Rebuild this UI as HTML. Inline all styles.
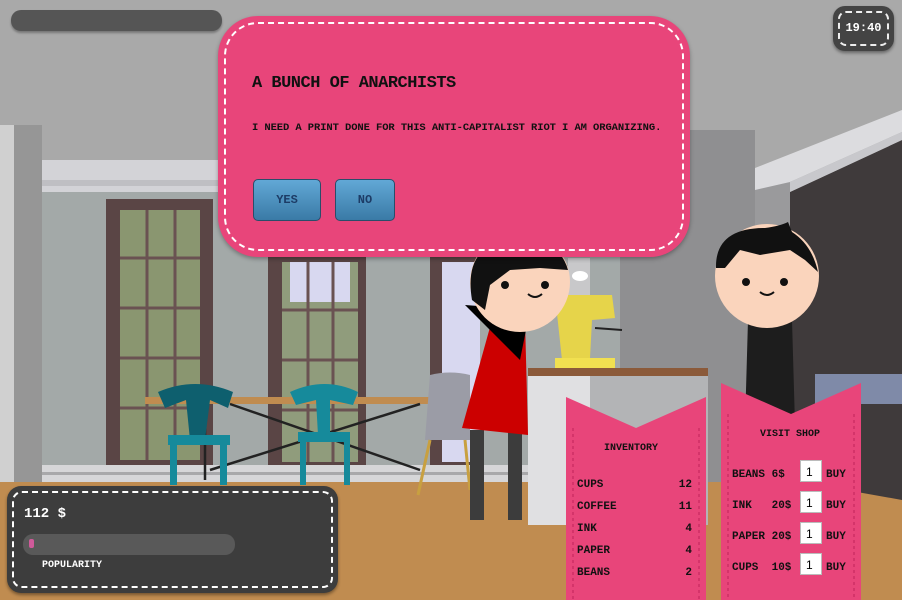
<!DOCTYPE html>
<html><head><meta charset="utf-8"><style>
*{margin:0;padding:0;box-sizing:border-box}
body{width:902px;height:600px;overflow:hidden;position:relative;background:#a9a9a9;font-family:"Liberation Mono",monospace;font-weight:bold;text-transform:uppercase}
.abs{position:absolute}
.dlg{left:218px;top:16px;width:472px;height:241px;background:#e8457a;border-radius:40px;box-shadow:0 2px 4px rgba(0,0,0,.3)}
.dlg .in{position:absolute;left:6px;top:6px;right:6px;bottom:6px;border:2px dashed #fff;border-radius:34px}
.btn{position:absolute;top:163px;height:42px;background:linear-gradient(#62a8d6,#3a7aa6);border:1px solid #2a4d6a;border-radius:5px;color:#1d3c66;font-size:12px;text-align:center;line-height:40px}
.panel{color:#111;font-size:11px}
</style></head><body>
<svg class="abs" style="left:0;top:0" width="902" height="600">
<rect width="902" height="600" fill="#a9a9a9"/>
<rect x="42" y="190" width="720" height="300" fill="#a3a9a8"/>
<rect x="42" y="160" width="190" height="32" fill="#d3d3d7"/>
<rect x="42" y="180" width="190" height="6" fill="#bfbfc3"/>
<rect x="0" y="125" width="14" height="375" fill="#d0d0d0"/>
<rect x="14" y="125" width="28" height="375" fill="#969696"/>
<rect x="620" y="130" width="135" height="360" fill="#8f8f91"/>
<rect x="755" y="170" width="40" height="320" fill="#9a9a9c"/>
<polygon points="755,168 902,110 902,132 790,182 755,190" fill="#dcdcdf"/>
<polygon points="790,192 902,140 902,600 790,600" fill="#3f3a3b"/>
<polygon points="790,182 902,132 902,140 790,192" fill="#c8c8cc"/>
<rect x="815" y="374" width="87" height="30" fill="#7f8aa8"/>
<polygon points="790,480 902,500 902,600 790,600" fill="#c08c50"/>
<rect x="106" y="199" width="107" height="272" fill="#5a4545"/>
<rect x="120" y="210" width="80" height="250" fill="#8a9670"/>
<g stroke="#6a5252" stroke-width="3"><line x1="147" y1="210" x2="147" y2="460"/><line x1="175" y1="210" x2="175" y2="460"/><line x1="120" y1="258" x2="200" y2="258"/><line x1="120" y1="308" x2="200" y2="308"/><line x1="120" y1="358" x2="200" y2="358"/><line x1="120" y1="408" x2="200" y2="408"/></g>
<rect x="268" y="255" width="98" height="216" fill="#5a4545"/>
<rect x="282" y="262" width="76" height="200" fill="#909c7c"/>
<rect x="290" y="262" width="60" height="40" fill="#d8d8f0"/>
<g stroke="#6a5252" stroke-width="3"><line x1="308" y1="262" x2="308" y2="462"/><line x1="333" y1="262" x2="333" y2="462"/><line x1="282" y1="310" x2="358" y2="310"/><line x1="282" y1="360" x2="358" y2="360"/><line x1="282" y1="410" x2="358" y2="410"/></g>
<rect x="430" y="255" width="50" height="216" fill="#5a4545"/>
<rect x="442" y="262" width="38" height="200" fill="#d8d8f0"/>
<rect x="42" y="465" width="520" height="18" fill="#d6d6d8"/>
<rect x="42" y="472" width="520" height="3" fill="#a8a8aa"/>
<rect x="0" y="482" width="790" height="118" fill="#c08c50"/>
<rect x="145" y="397" width="285" height="7" fill="#c08c50"/>
<g stroke="#222" stroke-width="2.5"><line x1="230" y1="404" x2="420" y2="470"/><line x1="420" y1="404" x2="210" y2="470"/><line x1="205" y1="404" x2="205" y2="480"/></g>
<g fill="#168a9b"><path d="M158 392 Q195 376 233 392 L228 408 L210 400 L205 440 L190 440 L186 400 L165 408Z" fill="#0e5f6e"/>
<rect x="168" y="435" width="62" height="10"/><rect x="170" y="440" width="7" height="45"/><rect x="220" y="440" width="7" height="45"/>
<path d="M290 392 Q325 376 358 392 L353 405 L330 400 L330 435 L318 435 L316 400 L296 405Z"/>
<rect x="298" y="432" width="52" height="10"/><rect x="300" y="440" width="6" height="45"/><rect x="344" y="440" width="6" height="45"/></g>
<path d="M430 375 Q450 370 470 375 L470 440 L425 440 Z" fill="#9b9ca6"/>
<g stroke="#c8a040" stroke-width="3"><line x1="430" y1="440" x2="418" y2="495"/><line x1="465" y1="440" x2="470" y2="490"/></g>
<rect x="528" y="375" width="62" height="150" fill="#e0e0e2"/>
<rect x="590" y="375" width="118" height="150" fill="#b3b4b6"/>
<rect x="528" y="368" width="180" height="8" fill="#8b5a3a"/>
<rect x="568" y="258" width="22" height="70" fill="#c8c8ca"/>
<path d="M555 295 L612 295 L615 318 L592 320 L590 358 L562 360 Z" fill="#e6d44a"/>
<rect x="555" y="358" width="60" height="10" fill="#f1e050"/>
<line x1="595" y1="328" x2="622" y2="330" stroke="#222" stroke-width="2"/>
<ellipse cx="580" cy="276" rx="8" ry="5" fill="#fff"/>
<path d="M748 320 L792 320 L800 600 L740 600Z" fill="#1d1d1d"/>
<circle cx="767" cy="276" r="52" fill="#fad4bc"/>
<path d="M716 268 Q715 228 765 228 Q780 226 788 222 L792 232 Q812 245 818 272 L805 260 L790 250 L760 255 L740 250 L725 268Z" fill="#111"/>
<circle cx="746" cy="282" r="4" fill="#111"/><circle cx="784" cy="282" r="4" fill="#111"/>
<path d="M760 292 Q767 298 774 292" stroke="#111" stroke-width="2" fill="none"/>
<g fill="#3c3c3c"><rect x="470" y="430" width="14" height="90"/><rect x="508" y="430" width="14" height="90"/></g>
<path d="M492 320 L525 320 L528 435 L462 428Z" fill="#cc0000"/>
<path d="M465 305 L530 310 L520 360 L490 330Z" fill="#000"/>
<circle cx="520" cy="282" r="50" fill="#fad4bc"/>
<path d="M472 300 Q462 240 520 240 Q560 240 568 270 L540 268 L510 270 L490 285 L485 310Z" fill="#111"/>
<circle cx="505" cy="285" r="4" fill="#111"/><circle cx="545" cy="285" r="4" fill="#111"/>
<path d="M528 294 Q535 300 542 294" stroke="#111" stroke-width="2" fill="none"/>
<polygon points="566,397 636,428 706,397 706,600 566,600" fill="#e8457a"/>
<polygon points="721,383 791,414 861,383 861,600 721,600" fill="#e8457a"/>
<g stroke="#c0245a" stroke-dasharray="3,3" stroke-width="1"><line x1="573" y1="428" x2="573" y2="600"/><line x1="699" y1="428" x2="699" y2="600"/><line x1="728" y1="414" x2="728" y2="600"/><line x1="854" y1="414" x2="854" y2="600"/></g>
</svg>

<div class="abs" style="left:11px;top:10px;width:211px;height:21px;background:#555;border-radius:10px;box-shadow:0 2px 2px rgba(0,0,0,.3)"></div>

<div class="abs dlg"><div class="in"></div>
<div class="abs" style="left:34px;top:58px;font-size:17px;color:#111;letter-spacing:-0.5px">A Bunch of Anarchists</div>
<div class="abs" style="left:34px;top:106px;font-size:10.5px;color:#111;letter-spacing:-0.1px">I need a print done for this anti-capitalist riot I am organizing.</div>
<div class="btn" style="left:35px;width:68px">YES</div>
<div class="btn" style="left:117px;width:60px">NO</div>
</div>

<div class="abs" style="left:833px;top:6px;width:61px;height:45px;background:#444;border-radius:12px;box-shadow:0 2px 3px rgba(0,0,0,.4)"><div class="abs" style="left:5px;top:5px;right:5px;bottom:5px;border:2px dashed #eee;border-radius:8px"></div><div class="abs" style="left:0;width:61px;top:15px;text-align:center;color:#fff;font-size:12px">19:40</div></div>

<div class="abs" style="left:7px;top:486px;width:331px;height:107px;background:#3d3d3d;border-radius:14px;box-shadow:0 2px 3px rgba(0,0,0,.4)">
<div class="abs" style="left:5px;top:5px;right:5px;bottom:5px;border:2px dashed #fff;border-radius:10px"></div>
<div class="abs" style="left:17px;top:20px;color:#fff;font-size:14px">112 $</div>
<div class="abs" style="left:16px;top:48px;width:212px;height:21px;background:#595959;border-radius:10px"><div class="abs" style="left:6px;top:5px;width:5px;height:9px;background:#d05a9a;border-radius:2px"></div></div>
<div class="abs" style="left:35px;top:74px;color:#fff;font-size:10px">Popularity</div>
</div>

<div class="abs panel" style="left:604px;top:443px;font-size:10px">Inventory</div>
<div class="abs panel" style="left:577px;top:474px;width:115px;line-height:22px">
<div style="display:flex;justify-content:space-between"><span>Cups</span><span>12</span></div>
<div style="display:flex;justify-content:space-between"><span>Coffee</span><span>11</span></div>
<div style="display:flex;justify-content:space-between"><span>Ink</span><span>4</span></div>
<div style="display:flex;justify-content:space-between"><span>Paper</span><span>4</span></div>
<div style="display:flex;justify-content:space-between"><span>Beans</span><span>2</span></div>
</div>
<div class="abs panel" style="left:760px;top:429px;font-size:10px">Visit Shop</div>
<div class="abs panel" style="left:732px;top:460px;line-height:31px">
<div style="height:31px">Beans 6$</div>
<div style="height:31px">Ink&nbsp;&nbsp;&nbsp;20$</div>
<div style="height:31px">Paper 20$</div>
<div style="height:31px">Cups&nbsp;&nbsp;10$</div>
</div>
<div class="abs" style="left:800px;top:460px">
<div style="position:absolute;top:0;width:22px;height:22px;background:#fff;border:1px solid #bbb;font:12px 'Liberation Sans',sans-serif;padding:4px 5px">1</div>
<div style="position:absolute;top:31px;width:22px;height:22px;background:#fff;border:1px solid #bbb;font:12px 'Liberation Sans',sans-serif;padding:4px 5px">1</div>
<div style="position:absolute;top:62px;width:22px;height:22px;background:#fff;border:1px solid #bbb;font:12px 'Liberation Sans',sans-serif;padding:4px 5px">1</div>
<div style="position:absolute;top:93px;width:22px;height:22px;background:#fff;border:1px solid #bbb;font:12px 'Liberation Sans',sans-serif;padding:4px 5px">1</div>
</div>
<div class="abs panel" style="left:826px;top:460px;line-height:31px"><div>Buy</div><div>Buy</div><div>Buy</div><div>Buy</div></div>
</body></html>
